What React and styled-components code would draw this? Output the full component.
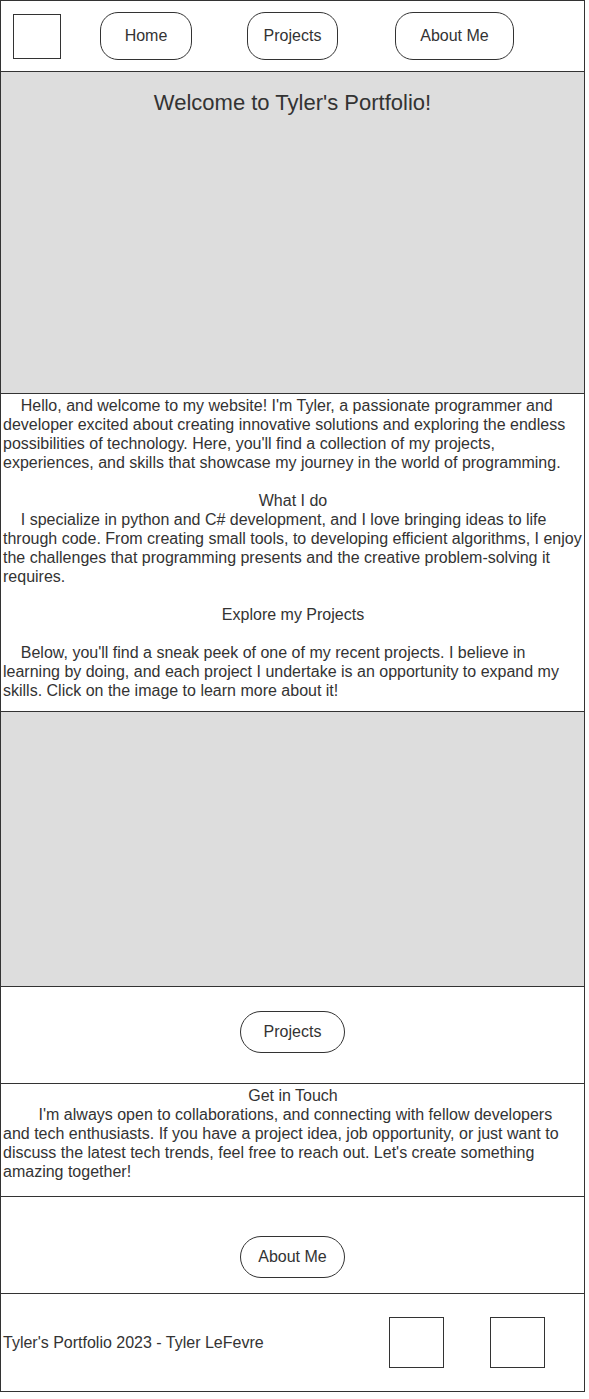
import React from 'react'
import styled, { createGlobalStyle } from 'styled-components'

const INK = '#333333'
const FILL = '#dddddd'

const GlobalStyle = createGlobalStyle`
  * {
    box-sizing: border-box;
  }

  body {
    margin: 0;
    background: #ffffff;
    color: ${INK};
    font-family: 'Liberation Sans', Arial, sans-serif;
    font-size: 16px;
  }
`

const Frame = styled.div`
  width: 585px;
  border: 1px solid ${INK};
  background: #ffffff;
`

const Section = styled.section`
  height: ${(p) => p.$height}px;
  border-bottom: 1px solid ${INK};
  background: ${(p) => (p.$shaded ? FILL : '#ffffff')};
`

const Header = styled.header`
  display: flex;
  align-items: center;
  height: 71px;
  padding-left: 12px;
  border-bottom: 1px solid ${INK};
`

const Logo = styled.div`
  width: 48px;
  height: 45px;
  border: 1px solid ${INK};
  margin-right: 39px;
`

const NavLinks = styled.nav`
  display: flex;
  align-items: center;
  gap: 55px;
`

const PillButton = styled.button`
  width: ${(p) => p.$width}px;
  height: ${(p) => p.$h}px;
  margin-left: ${(p) => p.$shift || 0}px;
  border: 1px solid ${INK};
  border-radius: ${(p) => p.$radius}px;
  background: #ffffff;
  color: ${INK};
  font-family: inherit;
  font-size: 16px;
  padding: 0;
  cursor: pointer;
`

const HeroTitle = styled.h1`
  margin: 0;
  padding-top: 18px;
  text-align: center;
  font-size: 22px;
  line-height: 26px;
  font-weight: normal;
`

const TextBlock = styled.div`
  padding: ${(p) => p.$top}px 1px 0 2px;
  line-height: 19px;
`

const Paragraph = styled.p`
  margin: ${(p) => (p.$spaced ? '19px' : '0')} 0 0;
  text-indent: ${(p) => p.$indent}px;
`

const Heading = styled.h2`
  margin: ${(p) => (p.$spaced ? '19px' : '0')} 0 0;
  text-align: center;
  font-size: 16px;
  line-height: 19px;
  font-weight: normal;
`

const CenterRow = styled.div`
  display: flex;
  justify-content: center;
  padding-top: ${(p) => p.$top}px;
`

const Footer = styled.footer`
  display: flex;
  align-items: center;
  height: 97px;
  padding: 0 39px 0 2px;
`

const FooterText = styled.span`
  flex: 1;
`

const FooterIcons = styled.div`
  display: flex;
  gap: 46px;
`

const IconBox = styled.div`
  width: 55px;
  height: 51px;
  border: 1px solid ${INK};
`

export default function App() {
  return (
    <>
      <GlobalStyle />
      <Frame>
        <Header>
          <Logo />
          <NavLinks>
            <PillButton $width={92} $h={48} $radius={18}>Home</PillButton>
            <PillButton $width={91} $h={48} $radius={18}>Projects</PillButton>
            <PillButton $width={119} $h={48} $radius={18} $shift={2}>About Me</PillButton>
          </NavLinks>
        </Header>

        <Section $height={322} $shaded>
          <HeroTitle>Welcome to Tyler's Portfolio!</HeroTitle>
        </Section>

        <Section $height={318}>
          <TextBlock $top={2}>
            <Paragraph $indent={17.8}>
              Hello, and welcome to my website! I'm Tyler, a passionate programmer and
              developer excited about creating innovative solutions and exploring the endless
              possibilities of technology. Here, you'll find a collection of my projects,
              experiences, and skills that showcase my journey in the world of programming.
            </Paragraph>
            <Heading $spaced>What I do</Heading>
            <Paragraph $indent={17.8}>
              I specialize in python and C# development, and I love bringing ideas to life
              through code. From creating small tools, to developing efficient algorithms, I
              enjoy the challenges that programming presents and the creative problem-solving
              it requires.
            </Paragraph>
            <Heading $spaced>Explore my Projects</Heading>
            <Paragraph $spaced $indent={17.8}>
              Below, you'll find a sneak peek of one of my recent projects. I believe in
              learning by doing, and each project I undertake is an opportunity to expand my
              skills. Click on the image to learn more about it!
            </Paragraph>
          </TextBlock>
        </Section>

        <Section $height={275} $shaded />

        <Section $height={97}>
          <CenterRow $top={24}>
            <PillButton $width={105} $h={42} $radius={21}>Projects</PillButton>
          </CenterRow>
        </Section>

        <Section $height={113}>
          <TextBlock $top={2}>
            <Heading>Get in Touch</Heading>
            <Paragraph $indent={35.6}>
              I'm always open to collaborations, and connecting with fellow developers and
              tech enthusiasts. If you have a project idea, job opportunity, or just want to
              discuss the latest tech trends, feel free to reach out. Let's create something
              amazing together!
            </Paragraph>
          </TextBlock>
        </Section>

        <Section $height={97}>
          <CenterRow $top={39}>
            <PillButton $width={105} $h={42} $radius={21}>About Me</PillButton>
          </CenterRow>
        </Section>

        <Footer>
          <FooterText>Tyler's Portfolio 2023 - Tyler LeFevre</FooterText>
          <FooterIcons>
            <IconBox />
            <IconBox />
          </FooterIcons>
        </Footer>
      </Frame>
    </>
  )
}
